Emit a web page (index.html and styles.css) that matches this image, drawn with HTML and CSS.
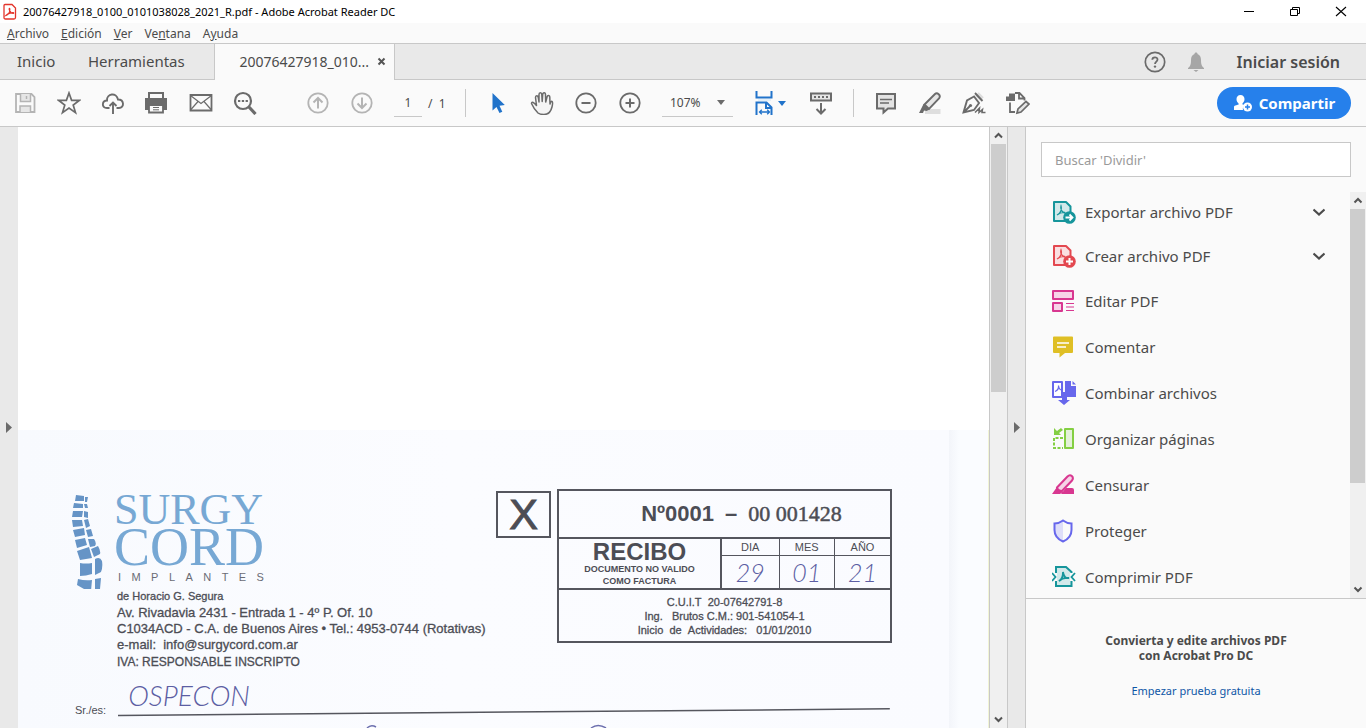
FILE: index.html
```html
<!DOCTYPE html>
<html lang="es">
<head>
<meta charset="utf-8">
<meta name="viewport" content="width=device-width, initial-scale=1">
<title>20076427918_0100_0101038028_2021_R.pdf - Adobe Acrobat Reader DC</title>
<link rel="stylesheet" href="styles.css">
</head>
<body>
<header class="titlebar">
  <svg class="app-icon" viewBox="0 0 14 18" width="14" height="18"><path d="M1 2.500Q1 1.500 2 1.500H9L12.500 5V14.500Q12.500 16 11 16H2.500Q1 16 1 14.500Z" fill="#fff" stroke="#e3342b" stroke-width="1.300"/><path d="M3 12.500C6 11.500 7.500 8 6.700 5.500C6 5 5.600 7 8 9.500C10 11 11.300 10.300 10.500 9.700C9 9.300 5 10.300 3 12.500Z" fill="none" stroke="#e3342b" stroke-width="1.200"/></svg>
  <span class="window-title">20076427918_0100_0101038028_2021_R.pdf - Adobe Acrobat Reader DC</span>
  <div class="window-buttons">
    <button aria-label="Minimizar"><svg width="12" height="12" viewBox="0 0 12 12"><path d="M1 5.500H11" stroke="#000" fill="none"/></svg></button>
    <button aria-label="Restaurar"><svg width="12" height="12" viewBox="0 0 12 12"><path d="M1.500 3.500H8.500V9.500H1.500ZM3.500 3V1.500H10.500V7.500H9" stroke="#000" fill="none"/></svg></button>
    <button aria-label="Cerrar"><svg width="12" height="12" viewBox="0 0 12 12"><path d="M1 1L11 10M11 1L1 10" stroke="#000" stroke-width="1.100" fill="none"/></svg></button>
  </div>
</header>

<nav class="menubar">
  <button><u>A</u>rchivo</button>
  <button><u>E</u>dición</button>
  <button><u>V</u>er</button>
  <button>Ve<u>n</u>tana</button>
  <button>A<u>y</u>uda</button>
</nav>

<div class="tabs">
  <button class="tab home">Inicio</button>
  <button class="tab tools-tab">Herramientas</button>
  <div class="tab document-tab">
    <span>20076427918_010...</span>
    <button aria-label="Cerrar pestaña"><svg width="9" height="9" viewBox="0 0 9 9"><path d="M1.500 1.500L7.500 7.500M7.500 1.500L1.500 7.500" stroke="#555" stroke-width="2"/></svg></button>
  </div>
  <div class="account">
    <button aria-label="Ayuda"><svg width="22" height="22" viewBox="0 0 22 22"><circle cx="11" cy="11" r="9.700" fill="none" stroke="#6b6b6b" stroke-width="1.700"/><path d="M8.300 8.800C8.300 5.500 13.700 5.500 13.500 8.700C13.400 10.600 11 10.700 11 13" fill="none" stroke="#6b6b6b" stroke-width="1.800"/><circle cx="11" cy="15.600" r="1.200" fill="#6b6b6b"/></svg></button>
    <button aria-label="Notificaciones"><svg width="18" height="22" viewBox="0 0 18 22"><path d="M9 1.500C10 1.500 10.500 2 10.500 3C13 4 14 6 14 9C14 14 15 15.500 17 17V18H1V17C3 15.500 4 14 4 9C4 6 5 4 7.500 3C7.500 2 8 1.500 9 1.500ZM6.500 19H11.500L9 21Z" fill="#a6a6a6"/></svg></button>
    <button class="signin">Iniciar sesión</button>
  </div>
</div>

<div class="toolbar">
  <button class="tool" aria-label="Guardar"><svg viewBox="0 0 24 24"><path d="M3 3H18.500L21.500 6V21H3Z" fill="none" stroke="#b4b4b4" stroke-width="1.800"/><path d="M7.500 3V10.500H17.500V3M7 21V15H17.500V21" fill="#e6e6e6" stroke="#b4b4b4" stroke-width="1.500"/><path d="M13.500 5V8" stroke="#b4b4b4" stroke-width="1.500"/></svg></button>
  <button class="tool" aria-label="Destacar"><svg viewBox="0 0 24 24"><path d="M12 2L14.600 9.300H22.500L16.200 14L18.500 21.600L12 17L5.500 21.600L7.800 14L1.500 9.300H9.400Z" fill="none" stroke="#6b6b6b" stroke-width="1.700"/></svg></button>
  <button class="tool" aria-label="Subir a la nube"><svg viewBox="0 0 24 24"><path d="M8.500 17H6C0 17 1 9.500 6 9.500C5.500 2.500 15.500 1 17 8.500C23.500 8.500 23.500 17 18 17H15.500" fill="none" stroke="#6b6b6b" stroke-width="1.900"/><path d="M12 23V12M8.500 15L12 11.500L15.500 15" fill="none" stroke="#6b6b6b" stroke-width="1.900"/></svg></button>
  <button class="tool" aria-label="Imprimir"><svg viewBox="0 0 24 24"><path d="M4 7V2H18V7" fill="none" stroke="#6b6b6b" stroke-width="2"/><path d="M0 7H22V19H18V14H4V19H0Z" fill="#6b6b6b"/><path d="M4 14H18V21.500H4Z" fill="#fafafa" stroke="#6b6b6b" stroke-width="1.800"/><path d="M8 16.500H14M8 18.800H14" stroke="#6b6b6b"/></svg></button>
  <button class="tool" aria-label="Correo"><svg viewBox="0 0 24 24"><path d="M1.500 4H22.500V19.500H1.500Z" fill="none" stroke="#6b6b6b" stroke-width="1.800"/><path d="M1.500 4.500L12 12.500L22.500 4.500M1.500 19L9 10.500M22.500 19L15 10.500" fill="none" stroke="#6b6b6b" stroke-width="1.200"/></svg></button>
  <button class="tool" aria-label="Buscar"><svg viewBox="0 0 24 24"><circle cx="10" cy="10" r="8" fill="none" stroke="#6b6b6b" stroke-width="2.200"/><path d="M15.500 15.500L22.500 23" stroke="#6b6b6b" stroke-width="3.200"/><path d="M5 10H7.300M8.800 10H11.100M12.600 10H14.900" stroke="#6b6b6b" stroke-width="2"/></svg></button>
  <button class="tool prev" aria-label="Página anterior"><svg viewBox="0 0 24 24"><circle cx="12" cy="12" r="9.700" fill="none" stroke="#b4b4b4" stroke-width="1.800"/><path d="M12 17.500V7.500M7.500 11.500L12 7L16.500 11.500" fill="none" stroke="#b4b4b4" stroke-width="2"/></svg></button>
  <button class="tool" aria-label="Página siguiente"><svg viewBox="0 0 24 24"><circle cx="12" cy="12" r="9.700" fill="none" stroke="#b4b4b4" stroke-width="1.800"/><path d="M12 6.500V16.500M7.500 12.500L12 17L16.500 12.500" fill="none" stroke="#b4b4b4" stroke-width="2"/></svg></button>
  <input class="page-number" type="text" value="1" aria-label="Número de página">
  <span class="page-total">/&nbsp; 1</span>
  <span class="divider"></span>
  <button class="tool" aria-label="Seleccionar"><svg viewBox="0 0 24 24"><path d="M6.500 2V19.500L10.500 16L13.500 22L16.300 20.700L13.500 14.700L18.800 14Z" fill="#2173ca"/></svg></button>
  <button class="tool" aria-label="Mano"><svg viewBox="0 0 24 24"><path d="M8 22C5.500 19.500 3 16 1.500 12.500C1.800 10.500 4 11 6.500 14.500L5.500 6.500C5.500 4 7.800 4 8.300 6.500L9 11V3.500C9 1 11.700 1 11.800 3.500L12.200 10.500L12.700 3.300C13 1 15.700 1.500 15.500 4L15.700 11L17 6C17.500 4 20 4 19.800 6.500L20 13C21.500 8 23.500 10 22 16C21 20 19 23.500 14 23.500C11.500 23.500 9.500 23.300 8 22Z" fill="#f5f5f5" stroke="#6b6b6b" stroke-width="1.500" stroke-linejoin="round"/></svg></button>
  <button class="tool" aria-label="Alejar"><svg viewBox="0 0 24 24"><circle cx="12" cy="12" r="9.700" fill="none" stroke="#6b6b6b" stroke-width="1.800"/><path d="M7.500 12H16.500" stroke="#6b6b6b" stroke-width="2"/></svg></button>
  <button class="tool" aria-label="Acercar"><svg viewBox="0 0 24 24"><circle cx="12" cy="12" r="9.700" fill="none" stroke="#6b6b6b" stroke-width="1.800"/><path d="M7.500 12H16.500M12 7.500V16.500" stroke="#6b6b6b" stroke-width="2"/></svg></button>
  <label class="zoom"><select aria-label="Zoom"><option>107%</option></select><svg width="8" height="5" viewBox="0 0 8 5"><path d="M0 0H8L4 5Z" fill="#6b6b6b"/></svg></label>
  <button class="tool fit" aria-label="Ajustar ancho"><svg viewBox="0 0 24 24"><path d="M4.500 0V6.500H19.500V0M4.500 24V11.500H14.500L19.500 16.500V24M14 11.500V17H19.500" fill="none" stroke="#2173ca" stroke-width="2"/><path d="M6 9H19" stroke="#dcecf8" stroke-width="1.500"/><path d="M8 21H17M9.800 18.700L7.500 21L9.800 23.300M15.200 18.700L17.500 21L15.200 23.300" fill="none" stroke="#2173ca" stroke-width="1.300"/></svg><svg class="caret" viewBox="0 0 8 5"><path d="M0 0H8L4 5Z" fill="#2173ca"/></svg></button>
  <button class="tool" aria-label="Modo de lectura"><svg viewBox="0 0 24 24"><path d="M2 2.500H22V9.500H2Z" fill="#e6e6e6" stroke="#6b6b6b" stroke-width="2"/><path d="M5 6H20" stroke="#6b6b6b" stroke-width="2" stroke-dasharray="2 2"/><path d="M12 12V22M7.500 18L12 22.500L16.500 18" fill="none" stroke="#6b6b6b" stroke-width="2"/></svg></button>
  <span class="divider second"></span>
  <button class="tool" aria-label="Comentario"><svg viewBox="0 0 24 24"><path d="M3 3H21V17.500H14L9.500 21.500V17.500H3Z" fill="#e3e3e3" stroke="#6b6b6b" stroke-width="2"/><path d="M6 8.500H18M6 12H15" stroke="#6b6b6b" stroke-width="1.300"/></svg></button>
  <button class="tool" aria-label="Resaltar"><svg viewBox="0 0 24 24"><path d="M7 23V20L12 18H22.500V23Z" fill="#dedede"/><path d="M6.500 13.500L17 3C19 1 23.500 4 21 7.500L11 18Z" fill="#e6e6e6" stroke="#6b6b6b" stroke-width="1.900"/><path d="M5.500 13L11.500 18.500L8.500 20L6 19.500L5 22H1Z" fill="#6b6b6b"/></svg></button>
  <button class="tool" aria-label="Firmar"><svg viewBox="0 0 24 24"><path d="M15 3L20 8" stroke="#ddd" stroke-width="5"/><path d="M13 2L20.500 10M12 5.500L5 9.500L1.500 21.500L12 19L17 12ZM2 21L8 15" fill="none" stroke="#6b6b6b" stroke-width="1.900"/><circle cx="8.500" cy="14.500" r="1.600" fill="#6b6b6b"/><path d="M13 21.500L17.500 17L17 21.500L20.500 18.500L20 21.500H23.500" fill="none" stroke="#6b6b6b" stroke-width="1.500"/></svg></button>
  <button class="tool" aria-label="Sello"><svg viewBox="0 0 24 24"><path d="M0 5.500H3V2.500H9V10H0Z" fill="#6b6b6b"/><path d="M9 2H13.500L18.500 7V9.500M13 2V7.500H18.500M4 11.500V21H9" fill="none" stroke="#6b6b6b" stroke-width="1.800"/><path d="M11 22L12 18L20 10.500L23 13L15 21Z" fill="#e6e6e6" stroke="#6b6b6b" stroke-width="1.700"/></svg></button>
  <button class="share"><svg width="20" height="18" viewBox="0 0 20 18"><path d="M7.500 1C10 1 11.500 2.700 11.500 5C11.500 7 10.700 8.500 9.500 9.300V10.500L12 11C10 12 9.500 14 10 16H1V13C1 11 5.500 11 5.500 10.500V9.300C4.300 8.500 3.500 7 3.500 5C3.500 2.700 5 1 7.500 1Z" fill="#fff"/><circle cx="14.500" cy="13" r="4.500" fill="#fff"/><path d="M12 13H17M14.500 10.500V15.500" stroke="#2680eb" stroke-width="1.500"/></svg><span>Compartir</span></button>
</div>

<main class="workspace">
  <button class="rail left" aria-label="Mostrar panel de navegación"><svg width="6" height="11" viewBox="0 0 6 11"><path d="M0 0L6 5.500L0 11Z" fill="#6b6b6b"/></svg></button>
  <section class="viewer">
    <article class="scan">
      <div class="letterhead">
        <div class="brand">
          <svg class="spine" width="34" height="96" viewBox="0 0 34 96" fill="#6694c6"><path d="M6 2L14 3V8H5ZM4 10L13 11V15L3 15ZM3 18L13 18L12 24L2 24ZM2 27L12 27L13 33L3 34ZM3 37L14 35L15 42L5 44ZM5 47L15 45L17 52L7 55ZM7 58L19 54L22 65L10 67ZM10 70Q16 71 22 70V81Q16 83 10 83ZM8 86Q15 88 22 87L21 98L14 96L7 92ZM15 4L18 4L17 9H15ZM14 11L17 11L18 15L15 15ZM14 18L18 19L18 25L14 24ZM14 27L18 26L20 33L16 35ZM16 37L21 36L23 43L18 44ZM18 46L24 46Q27 50 25 53L20 54ZM21 56L28 53Q31 58 30 61L24 64ZM25 66Q30 63 32 68Q33 74 31 79L25 82ZM25 86L31 85L30 96L25 96Z"/></svg>
          <div class="brand-name">
            <div class="surgy">SURGY</div>
            <div class="cord">CORD</div>
            <div class="implantes"><span>I</span><span>M</span><span>P</span><span>L</span><span>A</span><span>N</span><span>T</span><span>E</span><span>S</span></div>
          </div>
        </div>
        <address class="address">
          <p class="owner">de Horacio G. Segura</p>
          <p>Av. Rivadavia 2431 - Entrada 1 - 4º P. Of. 10</p>
          <p>C1034ACD - C.A. de Buenos Aires • Tel.: 4953-0744 (Rotativas)</p>
          <p>e-mail:&nbsp; info@surgycord.com.ar</p>
          <p class="iva">IVA: RESPONSABLE INSCRIPTO</p>
        </address>
      </div>
      <div class="letter-x">X</div>
      <div class="receipt">
        <div class="receipt-number"><b>Nº0001</b><b>–</b><span>00 001428</span></div>
        <div class="receipt-type">
          <div class="receipt-title"><strong>RECIBO</strong><b>DOCUMENTO NO VALIDO<br>COMO FACTURA</b></div>
          <table class="date">
            <thead><tr><th>DIA</th><th>MES</th><th>AÑO</th></tr></thead>
            <tbody><tr><td>29</td><td>01</td><td>21</td></tr></tbody>
          </table>
        </div>
        <div class="fiscal">C.U.I.T&nbsp; 20-07642791-8<br>Ing. &nbsp; Brutos C.M.: 901-541054-1<br>Inicio &nbsp;de &nbsp;Actividades: &nbsp; 01/01/2010</div>
      </div>
      <div class="recipient">
        <span>Sr./es:</span>
        <div class="filled"><span class="ink">OSPECON</span><svg class="rule" viewBox="0 0 769 10" preserveAspectRatio="none"><path d="M0 7.500L769 .8" stroke="#55565e" stroke-width="1.500"/></svg></div>
      </div>
      <svg class="next-line" width="260" height="5" viewBox="0 0 260 5" fill="none" stroke="#6c6fae" stroke-width="1.500"><path d="M9 5Q13 1 18 4M233 5Q240 0 248 5"/></svg>
    </article>
  </section>
  <div class="scrollbar" aria-hidden="true">
    <svg viewBox="0 0 17 17"><path d="M5 10.500L8.500 7L12 10.500" fill="none" stroke="#555" stroke-width="2"/></svg>
    <span class="thumb"></span>
    <svg class="down" viewBox="0 0 17 17"><path d="M5 6.500L8.500 10L12 6.500" fill="none" stroke="#555" stroke-width="2"/></svg>
  </div>
  <button class="rail" aria-label="Ocultar panel de herramientas"><svg width="6" height="11" viewBox="0 0 6 11"><path d="M0 0L6 5.500L0 11Z" fill="#6b6b6b"/></svg></button>
  <aside class="panel">
    <input class="search" type="text" placeholder="Buscar 'Dividir'" aria-label="Buscar herramientas">
    <div class="tool-area">
      <ul class="tool-list">
        <li class="expand"><button><svg viewBox="0 0 24 24"><path d="M2 2H14L18.500 6.500V21H2Z" fill="#d3e9ea" stroke="#16959b" stroke-width="2" stroke-linejoin="round"/><path d="M5 15C9 13.500 10 9 9 6C8 9 10 13 14 13.500M5 15Q9 12 13 12.500" fill="none" stroke="#16959b" stroke-width="1.300"/><circle cx="17.500" cy="17.500" r="6.300" fill="#16959b"/><path d="M13.500 17.500H20M17.500 14.500L20.500 17.500L17.500 20.500" fill="none" stroke="#fff" stroke-width="1.800"/></svg><span>Exportar archivo PDF</span><svg class="chevron" viewBox="0 0 12 8"><path d="M.5 1.500L6 6.500L11.500 1.500" fill="none" stroke="#4b4b4b" stroke-width="2.200"/></svg></button></li>
        <li class="expand"><button><svg viewBox="0 0 24 24"><path d="M2 2H14L18.500 6.500V21H2Z" fill="#fadfe1" stroke="#e34850" stroke-width="2" stroke-linejoin="round"/><path d="M5 15C9 13.500 10 9 9 6C8 9 10 13 14 13.500M5 15Q9 12 13 12.500" fill="none" stroke="#e34850" stroke-width="1.300"/><circle cx="17.500" cy="17.500" r="6.300" fill="#e34850"/><path d="M14 17.500H21M17.500 14V21" fill="none" stroke="#fff" stroke-width="2"/></svg><span>Crear archivo PDF</span><svg class="chevron" viewBox="0 0 12 8"><path d="M.5 1.500L6 6.500L11.500 1.500" fill="none" stroke="#4b4b4b" stroke-width="2.200"/></svg></button></li>
        <li><button><svg viewBox="0 0 24 24"><path d="M1 2H21V10H1ZM1 14H10V22H1Z" fill="#f7d4e8" stroke="#d83790" stroke-width="2" stroke-linejoin="round"/><path d="M14 14.500H22M14 18H22M14 21.500H22" stroke="#d83790" stroke-width="1.200"/></svg><span>Editar PDF</span></button></li>
        <li><button><svg viewBox="0 0 24 24"><path d="M2 1.500H20Q21 1.500 21 2.500V17Q21 18 20 18H13L7.500 22.500V18H2Q1 18 1 17V2.500Q1 1.500 2 1.500Z" fill="#dfbf25"/><path d="M5 8H17M5 12H14" stroke="#fff" stroke-width="1.600"/></svg><span>Comentar</span></button></li>
        <li><button><svg viewBox="0 0 24 24"><path d="M1 1H10V16H1Z" fill="#fff" stroke="#6767ec" stroke-width="2" stroke-linejoin="round"/><path d="M3 10.500Q7 9 6.500 4.500Q7 9 10 9" fill="none" stroke="#6767ec" stroke-width="1.200"/><path d="M13 0H19V5H24V16H15V19H18L12 24L6 19H10V11H13Z" fill="#6767ec"/><path d="M20.500 0L24 3.500H20.500Z" fill="#6767ec"/></svg><span>Combinar archivos</span></button></li>
        <li><button><svg viewBox="0 0 24 24"><path d="M13 2H21V21H13Z" fill="#e3f1d9" stroke="#84cf43" stroke-width="2" stroke-linejoin="round"/><path d="M11 11H2V21H11" fill="none" stroke="#84cf43" stroke-width="2" stroke-dasharray="3 1.500"/><path d="M2 1V8H9L7 6L11 3L9 1L5 4Z" fill="#84cf43"/></svg><span>Organizar páginas</span></button></li>
        <li><button><svg viewBox="0 0 24 24"><path d="M0 21L5 14L11 19L8 21H0ZM14 15H20Q22 15 22 17V21H9Z" fill="#d83790"/><path d="M5 14.500L15.500 3.500C18.500 .5 22.500 4 20 7.500L10 18Q6 18 5 14.500Z" fill="#f6d3e6" stroke="#d83790" stroke-width="2"/></svg><span>Censurar</span></button></li>
        <li><button><svg viewBox="0 0 24 24"><path d="M11 2V22Q4 18 3 12V5Q8 4 11 2Z" fill="#dedef9"/><path d="M11 1.500Q15 4.500 19.500 4.500V11Q19.500 19 11 22.500Q2.500 19 2.500 11V4.500Q7 4.500 11 1.500Z" fill="none" stroke="#6767ec" stroke-width="2"/></svg><span>Proteger</span></button></li>
        <li><button><svg viewBox="0 0 24 24"><path d="M4 8V2H14L19.500 7V8M4 16V21H19.500V16" fill="#d3e9ea" stroke="#16959b" stroke-width="2"/><path d="M5 8H18V16H5Z" fill="#d3e9ea"/><path d="M7 16Q11 14 11 7Q12 14 17 13Q11 12 7 16ZM0 8L3.500 12L0 16M23 8L19.500 12L23 16" fill="none" stroke="#16959b" stroke-width="1.800"/></svg><span>Comprimir PDF</span></button></li>
      </ul>
      <div class="scrollbar panel-scroll" aria-hidden="true">
        <svg viewBox="0 0 17 17"><path d="M4.500 10.500L8 7L11.500 10.500" fill="none" stroke="#555" stroke-width="2"/></svg>
        <span class="thumb"></span>
        <svg class="down" viewBox="0 0 17 17"><path d="M4.500 6.500L8 10L11.500 6.500" fill="none" stroke="#555" stroke-width="2"/></svg>
      </div>
    </div>
    <footer class="promo">
      <strong>Convierta y edite archivos PDF<br>con Acrobat Pro DC</strong>
      <a href="#">Empezar prueba gratuita</a>
    </footer>
  </aside>
</main>
</body>
</html>
```

FILE: styles.css
```css
* { box-sizing: border-box; }
body {
  margin: 0;
  height: 100vh;
  display: flex;
  flex-direction: column;
  overflow: hidden;
  background: #fafafa;
  color: #4b4b4b;
  font-family: "Noto Sans", "Open Sans", sans-serif;
  font-size: 12px;
}
button {
  border: 0;
  padding: 0;
  margin: 0;
  background: none;
  color: inherit;
  font: inherit;
}
svg { display: block; flex: none; }

/* Window chrome */
.titlebar {
  flex: none;
  height: 23px;
  display: flex;
  align-items: center;
  padding-left: 3px;
  gap: 6px;
  background: #fff;
  color: #000;
  font-size: 11px;
}
.window-title { flex: 1; white-space: nowrap; }
.window-buttons { display: flex; padding-right: 2px; }
.window-buttons button {
  width: 46px;
  height: 22px;
  display: grid;
  place-items: center;
}
.menubar {
  flex: none;
  height: 20px;
  display: flex;
  align-items: center;
  gap: 12px;
  padding: 0 7px;
}

/* Tabs */
.tabs {
  flex: none;
  height: 37px;
  display: flex;
  background: #e9e9e9;
  border-top: 1px solid #c8c8c8;
  font-size: 15px;
}
.tab { padding-bottom: 2px; border-bottom: 1px solid #c8c8c8; }
.home { width: 71px; padding-left: 17px; text-align: left; }
.tools-tab { width: 143px; padding-left: 17px; text-align: left; }
.document-tab {
  width: 181px;
  display: flex;
  align-items: center;
  justify-content: flex-end;
  gap: 8px;
  padding-right: 8px;
  border: 1px solid #c8c8c8;
  border-width: 0 1px;
  background: #fafafa;
  font-size: 14px;
}
.account {
  flex: 1;
  display: flex;
  align-items: center;
  justify-content: flex-end;
  padding-right: 26px;
  border-bottom: 1px solid #c8c8c8;
}
.account button + button { margin-left: 21px; }
.account .signin { margin-left: 32px; font-size: 16px; font-weight: 600; }

/* Toolbar */
.toolbar {
  flex: none;
  height: 47px;
  display: flex;
  align-items: center;
  padding: 0 15px 0 3px;
  border-bottom: 1px solid #c8c8c8;
}
.tool { width: 44px; height: 44px; display: flex; align-items: center; justify-content: center; }
.tool svg { width: 24px; height: 24px; }
.prev { margin-left: 29px; }
.page-number {
  width: 28px;
  height: 28px;
  margin: 0 6px 0 10px;
  padding: 0;
  border: 0;
  border-bottom: 1px solid #c8c8c8;
  background: none;
  color: inherit;
  font: inherit;
  text-align: center;
}
.page-total { width: 18px; white-space: nowrap; }
.divider { width: 1px; height: 28px; margin: 0 10px 0 19px; background: #c8c8c8; }
.divider.second { margin-left: 10px; }
.zoom {
  width: 71px;
  height: 28px;
  margin: 0 10px;
  padding: 0 8px;
  display: flex;
  align-items: center;
  border-bottom: 1px solid #c8c8c8;
}
.zoom select {
  flex: 1;
  min-width: 0;
  appearance: none;
  border: 0;
  background: none;
  color: inherit;
  font: inherit;
}
.tool.fit { width: 56px; gap: 2px; padding-right: 4px; }
.tool .caret { width: 8px; height: 5px; }
.share {
  width: 134px;
  height: 32px;
  margin-left: auto;
  display: flex;
  align-items: center;
  justify-content: center;
  gap: 6px;
  border-radius: 16px;
  background: #2680eb;
  color: #fff;
  font-size: 15px;
  font-weight: 700;
}

/* Workspace */
.workspace { flex: 1; min-height: 0; display: flex; }
.rail {
  flex: none;
  width: 18px;
  display: grid;
  place-items: center;
  background: #e9e9e9;
  border-left: 1px solid #c8c8c8;
}
.rail.left { border: 0; }
.viewer {
  flex: 1;
  min-width: 0;
  overflow: hidden;
  padding-top: 303px;
  background: #fff;
}
.scrollbar {
  flex: none;
  width: 18px;
  display: flex;
  flex-direction: column;
  border-left: 1px solid #c8c8c8;
  background: #f0f0f0;
}
.scrollbar svg { width: 17px; height: 17px; }
.scrollbar .thumb { height: 248px; margin: 0 1px; background: #cdcdcd; }
.scrollbar .down { margin-top: auto; }

/* Scanned receipt */
.scan {
  min-height: 298px;
  padding: 59px 96px 0 52px;
  display: grid;
  grid-template-columns: 1fr 55px 335px;
  grid-template-rows: 194px 35px auto;
  column-gap: 6px;
  background: linear-gradient(90deg, #f8fafe, #fbfcff 45%, #fafbff 96%, #f3f5fa 96%, #fafcff 97%);
  border-right: 1px solid #f1f4d5;
  color: #4c4d55;
  font-family: "Liberation Sans", Arial, sans-serif;
}
.brand { display: flex; height: 99px; gap: 10px; padding-top: 4px; }
.brand-name {
  width: 150px;
  color: #77a8d4;
  font-family: "Liberation Serif", "Times New Roman", serif;
}
.surgy { font-size: 44px; line-height: 34px; }
.cord { font-size: 54px; line-height: 40px; }
.implantes {
  display: flex;
  justify-content: space-between;
  padding: 4px 0 0 4px;
  color: #6a6c75;
  font-family: "Liberation Sans", Arial, sans-serif;
  font-size: 11px;
  line-height: 12px;
}
.address {
  margin-left: 47px;
  font-size: 13px;
  font-style: normal;
  line-height: 16px;
  white-space: nowrap;
  -webkit-text-stroke: 0.3px #4c4d55;
}
.address p { margin: 0; }
.address .owner { font-size: 11px; margin-bottom: 1px; }
.address .iva { font-size: 12px; margin-top: 1px; }
.letter-x {
  height: 47px;
  margin-top: 2px;
  display: grid;
  place-items: center;
  border: 2px solid #55565e;
  font-size: 43px;
  line-height: 43px;
  -webkit-text-stroke: 1px #4c4d55;
}
.receipt { height: 154px; border: 2px solid #55565e; }
.receipt-number {
  height: 46px;
  display: flex;
  align-items: center;
  justify-content: center;
  gap: 11px;
  padding-left: 34px;
  font-size: 22px;
}
.receipt-number span {
  font-family: "Liberation Serif", serif;
  -webkit-text-stroke: 0.5px #4c4d55;
}
.receipt-type {
  height: 53px;
  display: flex;
  border: solid #55565e;
  border-width: 2px 0;
}
.receipt-title {
  flex: 1;
  display: flex;
  flex-direction: column;
  align-items: center;
  justify-content: center;
  text-align: center;
  font-size: 9px;
  line-height: 12px;
}
.receipt-title strong { font-size: 24px; line-height: 23px; }
.date { width: 170px; border-collapse: collapse; table-layout: fixed; border-left: 2px solid #55565e; }
.date th { height: 16px; padding: 0; border-bottom: 1px solid #55565e; font-size: 11px; font-weight: 400; line-height: 14px; }
.date th:first-child { width: 58px; }
.date td { padding: 0; text-align: center; color: #5c5ea3; font: italic 300 25px/26px Lato, sans-serif; }
.date th + th, .date td + td { border-left: 1px solid #55565e; }
.fiscal {
  padding-top: 5px;
  font-size: 11px;
  line-height: 14px;
  text-align: center;
  -webkit-text-stroke: 0.3px #4c4d55;
}
.recipient {
  grid-column: 1 / -1;
  display: flex;
  align-items: flex-end;
  gap: 12px;
  padding-left: 5px;
  font-size: 11px;
  line-height: 16px;
}
.filled { flex: 1; margin-right: 2px; }
.ink { display: block; padding-left: 10px; color: #5c5ea3; font: italic 300 28px/26px Lato, sans-serif; }
.rule { width: 100%; height: 10px; }
.next-line { grid-column: 1 / -1; margin: 5px 0 0 288px; }

/* Tools panel */
.panel {
  flex: none;
  width: 341px;
  display: flex;
  flex-direction: column;
  border-left: 1px solid #c8c8c8;
}
.search {
  height: 35px;
  margin: 15px 15px 13px;
  padding: 0 13px;
  border: 1px solid #c8c8c8;
  background: #fff;
  color: inherit;
  font: inherit;
  font-size: 13px;
}
.search::placeholder { color: #9a9a9a; opacity: 1; }
.tool-area { flex: 1; min-height: 0; display: flex; }
.tool-list {
  flex: 1;
  margin: 0;
  padding: 0 8px 0 15px;
  list-style: none;
  overflow: hidden;
  font-size: 15px;
}
.tool-list button {
  width: 100%;
  height: 46px;
  display: flex;
  align-items: center;
  gap: 9px;
  padding: 0 17px 0 11px;
  text-align: left;
}
.tool-list .expand button { height: 44px; }
.tool-list svg { width: 24px; height: 24px; }
.tool-list .chevron { width: 12px; height: 8px; margin-left: auto; }
.panel-scroll { width: 16px; border: 0; margin-top: 2px; }
.panel-scroll .thumb { height: 274px; margin: 0 1px 0 0; }
.promo {
  height: 130px;
  padding-top: 34px;
  border-top: 1px solid #c8c8c8;
  text-align: center;
  line-height: 15px;
}
.promo strong { display: block; margin-bottom: 20px; }
.promo a { color: #0d56a6; font-size: 11px; text-decoration: none; }
```
